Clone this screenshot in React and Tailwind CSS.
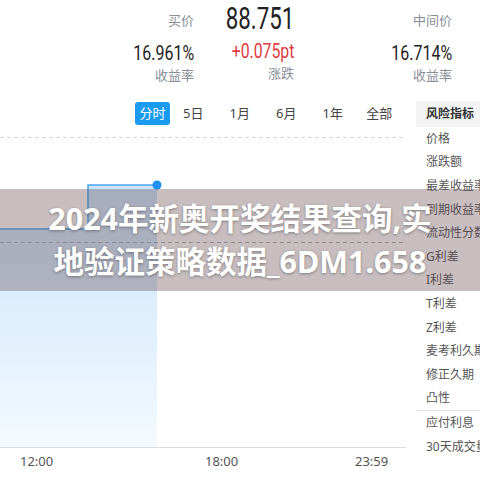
import React from 'react'

const TABS = ['5日', '1月', '6月', '1年', '全部']

const RISK = [
  '价格',
  '涨跌额',
  '最差收益率',
  '到期收益率',
  '流动性分数',
  'G利差',
  'I利差',
  'T利差',
  'Z利差',
  '麦考利久期',
  '修正久期',
  '凸性',
]

const num = { fontFamily: '"Roboto", "Liberation Sans", sans-serif' }
const cjk = { fontFamily: '"Noto Sans", "Noto Sans CJK SC", sans-serif' }

export default function App() {
  return (
    <div className="relative h-[480px] w-[480px] overflow-hidden bg-white text-[#333]" style={cjk}>
      {/* 顶部报价 */}
      <div className="flex h-[96px] pt-[3px]">
        <div className="flex w-[194px] flex-col items-end">
          <div className="mt-[5px] h-[24px] text-[13px] leading-[24px] text-[#8a8f99]">买价</div>
          <div className="mt-[10px] origin-right scale-x-[0.8] text-[20px] leading-[22px] text-[#222]" style={num}>16.961%</div>
          <div className="mt-[1px] text-[13px] leading-[20px] text-[#8a8f99]">收益率</div>
        </div>
        <div className="flex w-[100px] flex-col items-end">
          <div className="h-[31px] origin-right scale-x-[0.72] text-[31px] leading-[31px] text-[#222]" style={num}>88.751</div>
          <div className="mt-[6px] origin-right scale-x-[0.79] text-[20px] leading-[22px] text-[#e0393e]" style={num}>+0.075pt</div>
          <div className="mt-[1px] text-[13px] leading-[20px] text-[#8a8f99]">涨跌</div>
        </div>
        <div className="flex w-[158px] flex-col items-end">
          <div className="mt-[5px] h-[24px] text-[13px] leading-[24px] text-[#8a8f99]">中间价</div>
          <div className="mt-[10px] origin-right scale-x-[0.8] text-[20px] leading-[22px] text-[#222]" style={num}>16.714%</div>
          <div className="mt-[1px] text-[13px] leading-[20px] text-[#8a8f99]">收益率</div>
        </div>
      </div>

      <div className="flex">
        {/* 图表 */}
        <div className="w-[406px] shrink-0">
          <div className="flex h-[34px] items-start pt-[6px]">
            <div className="ml-[135px] flex h-[23px] w-[35px] items-center justify-center rounded-[3px] bg-[#1a9bf0] text-[13px] text-white">
              分时
            </div>
            {TABS.map((t) => (
              <div key={t} className="flex h-[23px] w-[46.5px] items-center justify-center text-[13px] text-[#444]">
                {t}
              </div>
            ))}
          </div>
          <svg width="406" height="320" viewBox="0 0 406 320" className="block">
            <defs>
              <linearGradient id="fill" x1="0" y1="0" x2="0" y2="1">
                <stop offset="0" stopColor="#c9e4fa" />
                <stop offset="1" stopColor="#f4faff" />
              </linearGradient>
            </defs>
            <line x1="0" y1="7.5" x2="406" y2="7.5" stroke="#d4d7dc" strokeDasharray="4 3" />
            <path d="M0 99 H88 V55 H157 V317 H0 Z" fill="url(#fill)" />
            <line x1="0" y1="112.5" x2="406" y2="112.5" stroke="#aab0b8" strokeDasharray="4 3" />
            <path d="M0 99 H88 V55 H157" fill="none" stroke="#4aa7ee" strokeWidth="1.5" />
            <circle cx="157" cy="55" r="4.5" fill="#1f8ff0" />
            <line x1="0" y1="317.5" x2="406" y2="317.5" stroke="#d9dce0" />
          </svg>
          <div className="relative h-[30px] text-[13px] text-[#555]">
            <span className="absolute left-[20px] top-[2px]">12:00</span>
            <span className="absolute left-[205px] top-[2px]">18:00</span>
            <span className="absolute left-[355px] top-[2px]">23:59</span>
          </div>
        </div>

        {/* 风险指标 */}
        <div className="ml-[10px] min-w-0 flex-1 overflow-hidden whitespace-nowrap pt-[5px] text-[12px]">
          <div className="flex h-[26px] items-center bg-[#f4f4f5] pl-[10px] font-bold text-[#333]">风险指标</div>
          {RISK.map((r) => (
            <div key={r} className="flex h-[23.6px] items-center pl-[10px] text-[#555]">
              {r}
            </div>
          ))}
          <div className="border-t border-[#e3e5e8]" />
          <div className="flex h-[23.6px] items-center pl-[10px] text-[#555]">应付利息</div>
          <div className="flex h-[23.6px] items-center pl-[10px] text-[#555]">30天成交量</div>
        </div>
      </div>

      {/* 标题遮罩 */}
      <div className="absolute left-0 right-0 top-[189px] flex h-[102px] flex-col items-center justify-center bg-[rgba(98,69,75,0.35)]">
        <div className="text-center text-[30.5px] font-bold leading-[43px] text-white [text-shadow:0_1px_3px_rgba(0,0,0,0.35)]">
          2024年新奥开奖结果查询,实
          <br />
          地验证策略数据_6DM1.658
        </div>
      </div>
    </div>
  )
}
